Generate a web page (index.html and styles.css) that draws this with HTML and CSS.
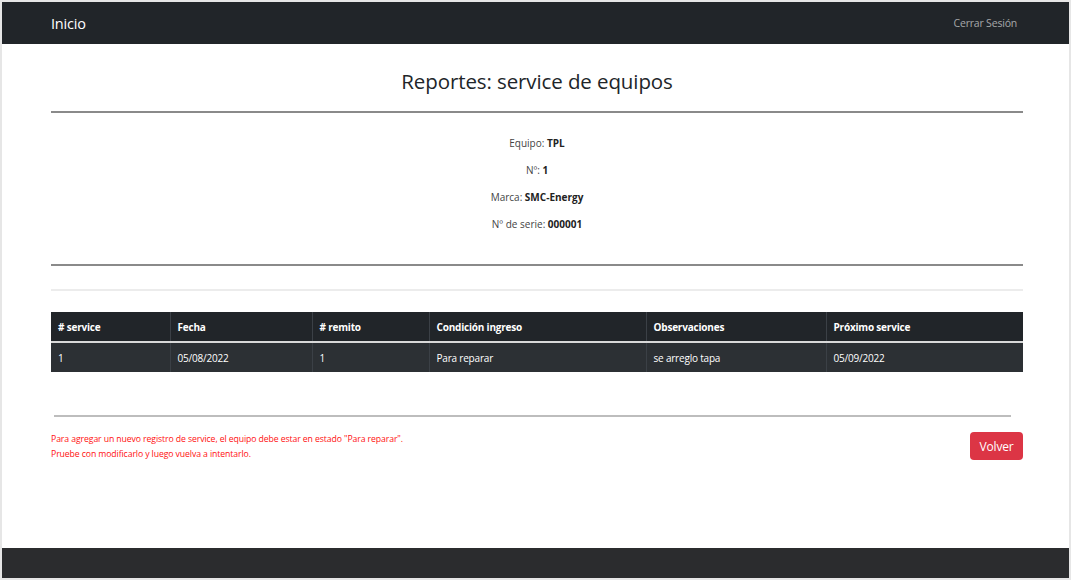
FILE: index.html
```html
<!DOCTYPE html>
<html lang="es">
<head>
<meta charset="utf-8">
<title>Reportes</title>
<link rel="stylesheet" href="styles.css">
</head>
<body>
<div class="frame">
  <nav class="navbar">
    <div class="container nav-inner">
      <a class="brand">Inicio</a>
      <a class="nav-link">Cerrar Sesión</a>
    </div>
  </nav>
  <main class="main">
    <div class="container">
      <h1 class="title">Reportes: service de equipos</h1>
      <hr class="rule-dark">
      <div class="info">
        <p>Equipo: <b>TPL</b></p>
        <p>Nº: <b>1</b></p>
        <p>Marca: <b>SMC-Energy</b></p>
        <p>Nº de serie: <b>000001</b></p>
      </div>
      <hr class="rule-dark rule-2">
      <hr class="rule-light">
      <table class="grid">
        <thead>
          <tr>
            <th class="c1"># service</th>
            <th class="c2">Fecha</th>
            <th class="c3"># remito</th>
            <th class="c4">Condición ingreso</th>
            <th class="c5">Observaciones</th>
            <th class="c6">Próximo service</th>
          </tr>
        </thead>
        <tbody>
          <tr>
            <td>1</td>
            <td>05/08/2022</td>
            <td>1</td>
            <td>Para reparar</td>
            <td>se arreglo tapa</td>
            <td>05/09/2022</td>
          </tr>
        </tbody>
      </table>
      <hr class="rule-mid">
      <div class="bottom">
        <div class="warn">
          <p>Para agregar un nuevo registro de service, el equipo debe estar en estado "Para reparar".</p>
          <p>Pruebe con modificarlo y luego vuelva a intentarlo.</p>
        </div>
        <button class="btn-back">Volver</button>
      </div>
    </div>
  </main>
  <footer class="footer"></footer>
</div>
</body>
</html>
```

FILE: styles.css
```css
* { box-sizing: border-box; }
html, body { margin: 0; padding: 0; }
body {
  font-family: "Open Sans", "Noto Sans", "Liberation Sans", sans-serif;
  color: #212529;
  background: #fff;
}
.frame {
  width: 1071px;
  height: 580px;
  border: 2px solid #e6e6e6;
  display: flex;
  flex-direction: column;
}
.container {
  width: 972px;
  margin-left: 49px;
}
.navbar {
  background: #212529;
  height: 42px;
  flex: none;
}
.nav-inner {
  height: 42px;
  display: flex;
  align-items: center;
  justify-content: space-between;
}
.brand {
  color: #fff;
  font-size: 14.5px;
  letter-spacing: -0.2px;
  padding-top: 1px;
}
.nav-link {
  color: rgba(255, 255, 255, 0.6);
  font-size: 10.5px;
  letter-spacing: -0.2px;
  padding-right: 6px;
}
.main { flex: 1; }
.title {
  margin: 22px 0 0;
  text-align: center;
  font-weight: 400;
  font-size: 20.5px;
  letter-spacing: -0.1px;
  line-height: 30px;
  color: #212529;
}
hr { border: 0; margin: 0; }
.rule-dark {
  margin-top: 15px;
  border-top: 2px solid #8a8a8a;
}
.info {
  text-align: center;
  font-size: 10px;
  color: #444;
  padding-top: 19px;
}
.info p {
  margin: 0;
  height: 27px;
  line-height: 22px;
}
.info b { color: #222; font-weight: 700; }
.rule-2 { margin-top: 24px; }
.rule-light {
  margin-top: 23px;
  border-top: 2px solid #ececec;
}
.grid {
  margin-top: 21px;
  width: 972px;
  border-collapse: collapse;
  font-size: 10px;
  color: #fff;
  table-layout: fixed;
}
.grid th, .grid td {
  text-align: left;
  padding: 0 7px;
  border-left: 1px solid #3b4046;
  letter-spacing: -0.2px;
}
.grid th:first-child, .grid td:first-child { border-left: 0; }
.grid thead tr {
  background: #212529;
  height: 30px;
  border-bottom: 2px solid #d9d9d9;
}
.grid th { font-weight: 700; }
.grid tbody tr {
  background: #2c3034;
  height: 30px;
}
.c1 { width: 119px; }
.c2 { width: 142px; }
.c3 { width: 117px; }
.c4 { width: 217px; }
.c5 { width: 180px; }
.c6 { width: 197px; }
.rule-mid {
  margin: 43px 12px 0 3px;
  border-top: 2px solid #bdbdbd;
}
.bottom {
  display: flex;
  justify-content: space-between;
  align-items: flex-start;
  margin-top: 15px;
}
.warn {
  color: #ff1010;
  font-size: 8.7px;
  letter-spacing: -0.1px;
}
.warn p { margin: 0; height: 15px; line-height: 15px; }
.btn-back {
  background: #dc3545;
  color: #fff;
  border: 0;
  border-radius: 4px;
  width: 53px;
  height: 28px;
  font-family: inherit;
  font-size: 12px;
  padding: 0;
  letter-spacing: -0.2px;
}
.footer {
  background: #2b2c2e;
  height: 30px;
  flex: none;
  margin-top: auto;
}
```
